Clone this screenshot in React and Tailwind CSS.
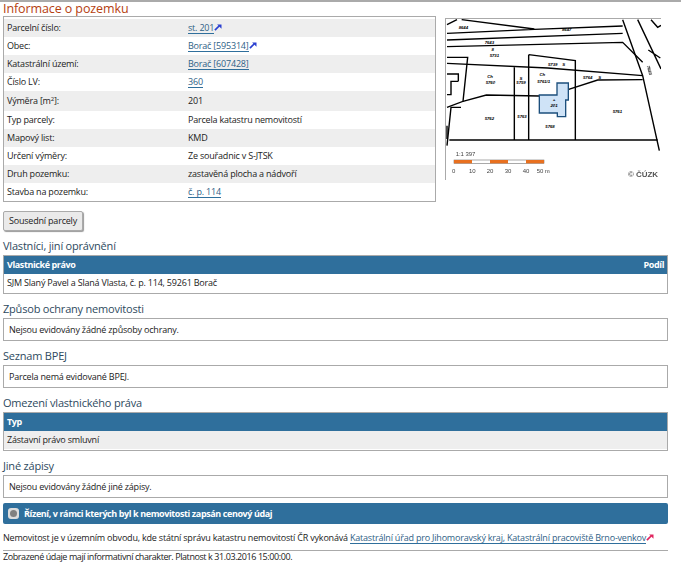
import React from 'react';

const rows = [
  ['Parcelní číslo:', 'st. 201', true, 'blue'],
  ['Obec:', 'Borač [595314]', true, 'blue'],
  ['Katastrální území:', 'Borač [607428]', true],
  ['Číslo LV:', '360', true],
  ['Výměra', '201'],
  ['Typ parcely:', 'Parcela katastru nemovitostí'],
  ['Mapový list:', 'KMD'],
  ['Určení výměry:', 'Ze souřadnic v S-JTSK'],
  ['Druh pozemku:', 'zastavěná plocha a nádvoří'],
  ['Stavba na pozemku:', 'č. p. 114', true],
];

const ExtIcon = ({ color }) => (
  <svg width="8" height="7" viewBox="0 0 9 8" className="inline-block align-baseline">
    <path d="M1 7 L6 2" stroke={color} strokeWidth="2" fill="none" />
    <path d="M3.5 0.5 H8.5 V5.5 Z" fill={color} />
  </svg>
);

const Link = ({ children }) => (
  <a className="text-[#2f6186] border-b border-[#2f6f9c] leading-[11px] inline-block">{children}</a>
);

const Heading = ({ children }) => (
  <h2 className="text-[11px] tracking-[-0.2px] leading-[16px] text-[#2e4a5e] mt-[7px] mb-[1px]">{children}</h2>
);

const Note = ({ children }) => (
  <div className="border border-[#aaa] h-[23px] flex items-center pl-[5px]">{children}</div>
);

const CadastreMap = () => (
  <svg width="215" height="161" viewBox="15 25 645 483" className="block" style={{ filter: 'blur(0.35px)' }}>
    <rect x="15" y="25" width="645" height="483" fill="#fff" />
    <g fill="none" stroke="#000" strokeWidth="4.2">
      <path d="M18 42 L48 27 M18 68 L280 56 L545 46 M62 27 L280 55 M18 88 L545 68 M18 108 L545 95 L605 155" />
      <path d="M545 27 L605 195 L655 420 M590 27 L660 175 M622 118 L658 142 M630 27 L650 50 L660 44" />
      <path d="M18 140 L80 140 L66 272 L18 290 M18 190 L52 190 L52 212 M52 212 L30 212 L30 252 L18 252" />
      <path d="M18 158 L320 172 L605 195 M605 207 L470 208 L383 236" />
      <path d="M66 272 L136 253 L295 256" />
      <path d="M220 170 V388 M263 132 V388 M263 132 L403 150 V388" />
      <path d="M25 388 H650 M18 405 L30 290 L60 290" />
      <path d="M18 345 V385" />
    </g>
    <path d="M348 217 H382 V268 L374 268 V318 H349 V307 H295 V253 H348 Z" fill="#cfe3f7" stroke="#1c4f7c" strokeWidth="4" />
    <g fontFamily="'Liberation Sans', sans-serif" fontSize="13" fontWeight="700" fontStyle="italic" fill="#000" textAnchor="middle">
      <text x="67" y="55">8644</text>
      <text x="377" y="62">8647</text>
      <text x="145" y="100">7643</text>
      <text x="155" y="122">8</text>
      <text x="160" y="138">5731</text>
      <text x="335" y="165">5739</text>
      <text x="368" y="165">S</text>
      <text x="147" y="202">Ch</text>
      <text x="148" y="219">5760</text>
      <text x="240" y="208">S</text>
      <text x="240" y="219">5759</text>
      <text x="304" y="195">Ch</text>
      <text x="308" y="216">5761/1</text>
      <text x="440" y="205">5764</text>
      <text x="476" y="205">S</text>
      <text x="339" y="272">+</text>
      <text x="339" y="288">201</text>
      <text x="145" y="327">5762</text>
      <text x="243" y="323">5763</text>
      <text x="327" y="353">5768</text>
      <text x="529" y="306">5761</text>
      <text x="620" y="180" transform="rotate(75 620 180)">7643</text>
    </g>
    <g fontFamily="'Liberation Sans', sans-serif" fontSize="18" fill="#444">
      <text x="44" y="436">1:1 397</text>
      <text x="33" y="486">0</text>
      <text x="84" y="486">10</text>
      <text x="137" y="486">20</text>
      <text x="191" y="486">30</text>
      <text x="245" y="486">40</text>
      <text x="287" y="486">50 m</text>
    </g>
    <rect x="39" y="448" width="270" height="10" fill="#fff" stroke="#555" strokeWidth="1.5" />
    <rect x="39" y="448" width="54" height="10" fill="#e8701f" />
    <rect x="147" y="448" width="54" height="10" fill="#e8701f" />
    <rect x="255" y="448" width="54" height="10" fill="#e8701f" />
    <text x="561" y="499" fontFamily="'Liberation Sans', sans-serif" fontSize="24" fontWeight="700" fill="#555">© ČÚZK</text>
  </svg>
);

export default function App() {
  return (
    <div className="w-[681px] h-[569px] overflow-hidden bg-white border-t-2 border-[#aaa] px-[3px] text-[9px] tracking-[-0.2px] text-[#222] font-['Open_Sans','Liberation_Sans',sans-serif]">
      <div className="w-[665px]">
        <h1 className="text-[12.5px] tracking-[-0.1px] leading-[14px] text-[#b5400f]">Informace o pozemku</h1>

        <div className="flex items-start">
          <div className="w-[433px] border border-[#aaa] pt-[2px]">
            {rows.map(([label, value, isLink, ext], i) => (
              <div
                key={label}
                className={`flex items-center pl-[3px] ${i === 4 ? 'h-[20px]' : 'h-[18px]'} ${i % 2 === 0 ? 'bg-[#eee]' : 'bg-white'}`}
              >
                <div className="w-[181px] shrink-0">
                  {i === 4 ? <>Výměra [m<sup className="text-[6px]">2</sup>]:</> : label}
                </div>
                <div>
                  {isLink ? <Link>{value}</Link> : value}
                  {ext && <ExtIcon color="#2a3fd0" />}
                </div>
              </div>
            ))}
          </div>
          <div className="ml-[9px] mt-[2px] border border-[#aaa] w-[216px] h-[162px]">
            <CadastreMap />
          </div>
        </div>

        <button className="block mt-[9px] w-[80px] h-[20px] border border-[#aaa] rounded-[2px] bg-[#eaeaea] shadow-[1px_1px_1px_#999] whitespace-nowrap text-[9px] text-[#222]">
          Sousední parcely
        </button>

        <Heading>Vlastníci, jiní oprávnění</Heading>
        <div className="border border-[#aaa] pb-px">
          <div className="bg-[#2f6f9c] text-white font-bold tracking-[-0.4px] h-[18px] flex items-center justify-between px-[3px]">
            <span>Vlastnické právo</span>
            <span>Podíl</span>
          </div>
          <div className="h-[18px] flex items-center px-[3px]">SJM Slaný Pavel a Slaná Vlasta, č. p. 114, 59261 Borač</div>
        </div>

        <Heading>Způsob ochrany nemovitosti</Heading>
        <Note>Nejsou evidovány žádné způsoby ochrany.</Note>

        <Heading>Seznam BPEJ</Heading>
        <Note>Parcela nemá evidované BPEJ.</Note>

        <Heading>Omezení vlastnického práva</Heading>
        <div className="border border-[#aaa] pb-px">
          <div className="bg-[#2f6f9c] text-white font-bold tracking-[-0.4px] h-[18px] flex items-center px-[3px]">Typ</div>
          <div className="bg-[#eee] h-[18px] flex items-center px-[3px]">Zástavní právo smluvní</div>
        </div>

        <Heading>Jiné zápisy</Heading>
        <Note>Nejsou evidovány žádné jiné zápisy.</Note>

        <div className="mt-[5px] h-[21px] bg-[#2f6f9c] rounded-[2px] flex items-center pl-[5px] text-white font-bold tracking-[-0.4px]">
          <span className="w-[11px] h-[11px] rounded-[3px] bg-[#dcdcdc] flex items-center justify-center mr-[5px]">
            <span className="w-[7px] h-[7px] rounded-full bg-[#808080]" />
          </span>
          Řízení, v rámci kterých byl k nemovitosti zapsán cenový údaj
        </div>

        <div className="mt-[6px] h-[15px] flex items-center whitespace-nowrap">
          Nemovitost je v územním obvodu, kde státní správu katastru nemovitostí ČR vykonává&nbsp;
          <Link>Katastrální úřad pro Jihomoravský kraj, Katastrální pracoviště Brno-venkov</Link>
          <ExtIcon color="#e0245e" />
        </div>

        <div className="border-t border-[#aaa] mt-[5px] leading-[12px] tracking-[-0.42px]">
          Zobrazené údaje mají informativní charakter. Platnost k 31.03.2016 15:00:00.
        </div>
      </div>
    </div>
  );
}
